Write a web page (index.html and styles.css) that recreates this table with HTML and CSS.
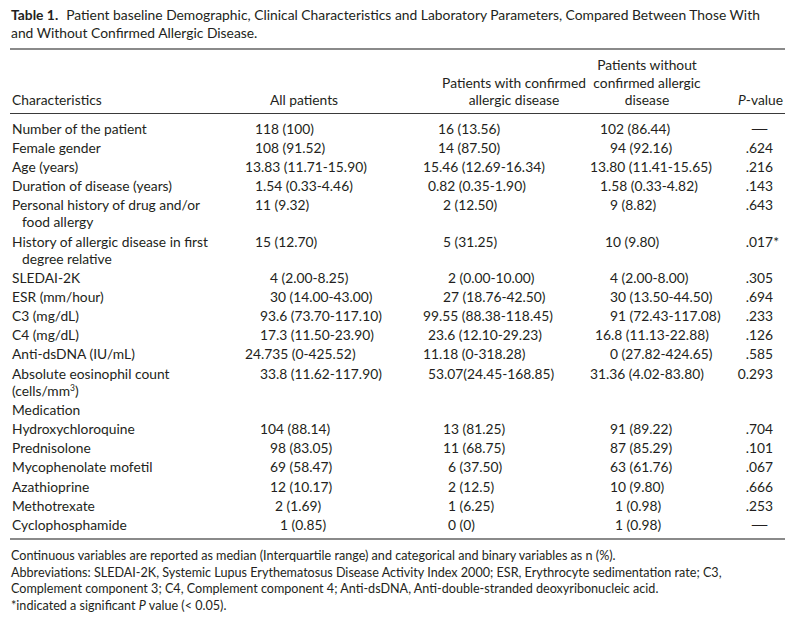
FILE: index.html
```html
<!DOCTYPE html>
<html lang="en">
<head>
<meta charset="utf-8">
<title>Table 1</title>
<link rel="stylesheet" href="styles.css">
</head>
<body>
<div class="page">
  <p class="caption"><span class="caption-label">Table 1.</span>Patient baseline Demographic, Clinical Characteristics and Laboratory Parameters, Compared Between Those With<br>and Without Confirmed Allergic Disease.</p>
  <table class="data">
    <colgroup>
      <col class="w1"><col class="w2"><col class="w3"><col class="w4"><col class="w5">
    </colgroup>
    <thead>
      <tr>
        <th class="h1">Characteristics</th>
        <th class="h2">All patients</th>
        <th class="h3">Patients with confirmed<br>allergic disease</th>
        <th class="h4">Patients without<br>confirmed allergic<br>disease</th>
        <th class="h5"><i>P</i>-value</th>
      </tr>
    </thead>
    <tbody>
      <tr class="first">
        <td class="c1">Number of the patient</td>
        <td class="c2">118 (100)</td>
        <td class="c3 n5">16 (13.56)</td>
        <td class="c4 n10">102 (86.44)</td>
        <td class="c5 dash"><span class="dash-glyph">—</span></td>
      </tr>
      <tr>
        <td class="c1">Female gender</td>
        <td class="c2">108 (91.52)</td>
        <td class="c3 n5">14 (87.50)</td>
        <td class="c4">94 (92.16)</td>
        <td class="c5">.624</td>
      </tr>
      <tr>
        <td class="c1">Age (years)</td>
        <td class="c2 n10">13.83 (11.71-15.90)</td>
        <td class="c3 n20">15.46 (12.69-16.34)</td>
        <td class="c4 n20">13.80 (11.41-15.65)</td>
        <td class="c5">.216</td>
      </tr>
      <tr>
        <td class="c1">Duration of disease (years)</td>
        <td class="c2">1.54 (0.33-4.46)</td>
        <td class="c3 n15">0.82 (0.35-1.90)</td>
        <td class="c4 n10">1.58 (0.33-4.82)</td>
        <td class="c5">.143</td>
      </tr>
      <tr>
        <td class="c1">Personal history of drug and/or<span class="cont">food allergy</span></td>
        <td class="c2">11 (9.32)</td>
        <td class="c3">2 (12.50)</td>
        <td class="c4">9 (8.82)</td>
        <td class="c5">.643</td>
      </tr>
      <tr>
        <td class="c1">History of allergic disease in first<span class="cont">degree relative</span></td>
        <td class="c2">15 (12.70)</td>
        <td class="c3">5 (31.25)</td>
        <td class="c4 n5">10 (9.80)</td>
        <td class="c5">.017<span class="ast">*</span></td>
      </tr>
      <tr>
        <td class="c1">SLEDAI-2K</td>
        <td class="c2 p15">4 (2.00-8.25)</td>
        <td class="c3 p5">2 (0.00-10.00)</td>
        <td class="c4">4 (2.00-8.00)</td>
        <td class="c5">.305</td>
      </tr>
      <tr>
        <td class="c1">ESR (mm/hour)</td>
        <td class="c2 p15">30 (14.00-43.00)</td>
        <td class="c3">27 (18.76-42.50)</td>
        <td class="c4">30 (13.50-44.50)</td>
        <td class="c5">.694</td>
      </tr>
      <tr>
        <td class="c1">C3 (mg/dL)</td>
        <td class="c2 p5">93.6 (73.70-117.10)</td>
        <td class="c3 n20">99.55 (88.38-118.45)</td>
        <td class="c4">91 (72.43-117.08)</td>
        <td class="c5">.233</td>
      </tr>
      <tr>
        <td class="c1">C4 (mg/dL)</td>
        <td class="c2 p5">17.3 (11.50-23.90)</td>
        <td class="c3 n15">23.6 (12.10-29.23)</td>
        <td class="c4 n15">16.8 (11.13-22.88)</td>
        <td class="c5">.126</td>
      </tr>
      <tr>
        <td class="c1">Anti-dsDNA (IU/mL)</td>
        <td class="c2 n10">24.735 (0-425.52)</td>
        <td class="c3 n20">11.18 (0-318.28)</td>
        <td class="c4">0 (27.82-424.65)</td>
        <td class="c5">.585</td>
      </tr>
      <tr>
        <td class="c1">Absolute eosinophil count<br>(cells/mm<sup>3</sup>)</td>
        <td class="c2 p5">33.8 (11.62-117.90)</td>
        <td class="c3 n15">53.07(24.45-168.85)</td>
        <td class="c4 n20">31.36 (4.02-83.80)</td>
        <td class="c5">0.293</td>
      </tr>
      <tr>
        <td class="c1">Medication</td>
        <td class="c2"></td>
        <td class="c3"></td>
        <td class="c4"></td>
        <td class="c5"></td>
      </tr>
      <tr>
        <td class="c1">Hydroxychloroquine</td>
        <td class="c2 p5">104 (88.14)</td>
        <td class="c3">13 (81.25)</td>
        <td class="c4">91 (89.22)</td>
        <td class="c5">.704</td>
      </tr>
      <tr>
        <td class="c1">Prednisolone</td>
        <td class="c2 p15">98 (83.05)</td>
        <td class="c3">11 (68.75)</td>
        <td class="c4">87 (85.29)</td>
        <td class="c5">.101</td>
      </tr>
      <tr>
        <td class="c1">Mycophenolate mofetil</td>
        <td class="c2 p15">69 (58.47)</td>
        <td class="c3 p5">6 (37.50)</td>
        <td class="c4">63 (61.76)</td>
        <td class="c5">.067</td>
      </tr>
      <tr>
        <td class="c1">Azathioprine</td>
        <td class="c2 p15">12 (10.17)</td>
        <td class="c3 p5">2 (12.5)</td>
        <td class="c4">10 (9.80)</td>
        <td class="c5">.666</td>
      </tr>
      <tr>
        <td class="c1">Methotrexate</td>
        <td class="c2 p20">2 (1.69)</td>
        <td class="c3 p5">1 (6.25)</td>
        <td class="c4 p5">1 (0.98)</td>
        <td class="c5">.253</td>
      </tr>
      <tr class="last">
        <td class="c1">Cyclophosphamide</td>
        <td class="c2 p25">1 (0.85)</td>
        <td class="c3 p5">0 (0)</td>
        <td class="c4 p5">1 (0.98)</td>
        <td class="c5 dash"><span class="dash-glyph">—</span></td>
      </tr>
    </tbody>
  </table>
  <div class="notes">
    <p>Continuous variables are reported as median (Interquartile range) and categorical and binary variables as n (%).</p>
    <p>Abbreviations: SLEDAI-2K, Systemic Lupus Erythematosus Disease Activity Index 2000; ESR, Erythrocyte sedimentation rate; C3,<br>Complement component 3; C4, Complement component 4; Anti-dsDNA, Anti-double-stranded deoxyribonucleic acid.</p>
    <p>*indicated a significant <i>P</i> value (&lt; 0.05).</p>
  </div>
</div>
</body>
</html>
```
FILE: styles.css
```css
* { box-sizing: border-box; }
html, body { margin: 0; padding: 0; background: #ffffff; }
body {
  font-family: Lato, "Open Sans", "Liberation Sans", sans-serif;
  font-size: 13.8px;
  color: #231f20;
}
.page {
  width: 795px;
  padding: 6px 10px 0 10px;
}
.caption {
  margin: 0 0 6px 1px;
  font-size: 13.85px;
  line-height: 18px;
}
.caption-label {
  font-weight: 700;
  margin-right: 8px;
}
.data {
  width: 775px;
  table-layout: fixed;
  border-collapse: separate;
  border-spacing: 0;
}
.w1 { width: 225px; }
.w2 { width: 195px; }
.w3 { width: 162px; }
.w4 { width: 110px; }
.w5 { width: 83px; }

.data th {
  font-weight: 400;
  vertical-align: bottom;
  line-height: 17.5px;
  padding: 6px 0 4px 0;
  border-top: 2px solid #8a8a8a;
  border-bottom: 1px solid #3a3a3a;
  white-space: nowrap;
}
.h1 { text-align: left; padding-left: 2px !important; }
.h2 { text-align: center; padding-right: 57px !important; }
.h3 { text-align: center; padding-left: 6px !important; }
.h4 { text-align: center; }
.h5 { text-align: right; padding-right: 2px !important; }

.data td {
  padding: 1.1px 0;
  line-height: 17px;
  vertical-align: top;
  white-space: nowrap;
}
.data tr.first td { padding-top: 6.1px; }
.data tr.last td {
  padding-bottom: 5px;
  border-bottom: 2px solid #8a8a8a;
}
.c1 { padding-left: 2px !important; }
.c2 { padding-left: 20px !important; }
.c3 { padding-left: 13px !important; }
.c4 { padding-left: 18px !important; }
.c5 { text-align: right; padding-right: 12px !important; }
.cont { display: block; padding-left: 10px; }
sup { font-size: 8.5px; line-height: 0; vertical-align: 5px; }

.n20 { text-indent: -20px; }
.n15 { text-indent: -15px; }
.n10 { text-indent: -10px; }
.n5 { text-indent: -5px; }
.p5 { text-indent: 5px; }
.p15 { text-indent: 15px; }
.p20 { text-indent: 20px; }
.p25 { text-indent: 25px; }

.dash { padding-right: 20px !important; }
.dash-glyph {
  display: inline-block;
  transform: scaleX(1.7);
  transform-origin: center;
}
.ast { margin-right: -6px; }

.notes {
  margin-top: 8.5px;
  padding-left: 1px;
  font-size: 12.6px;
  line-height: 16.5px;
}
.notes p { margin: 0; }
```
